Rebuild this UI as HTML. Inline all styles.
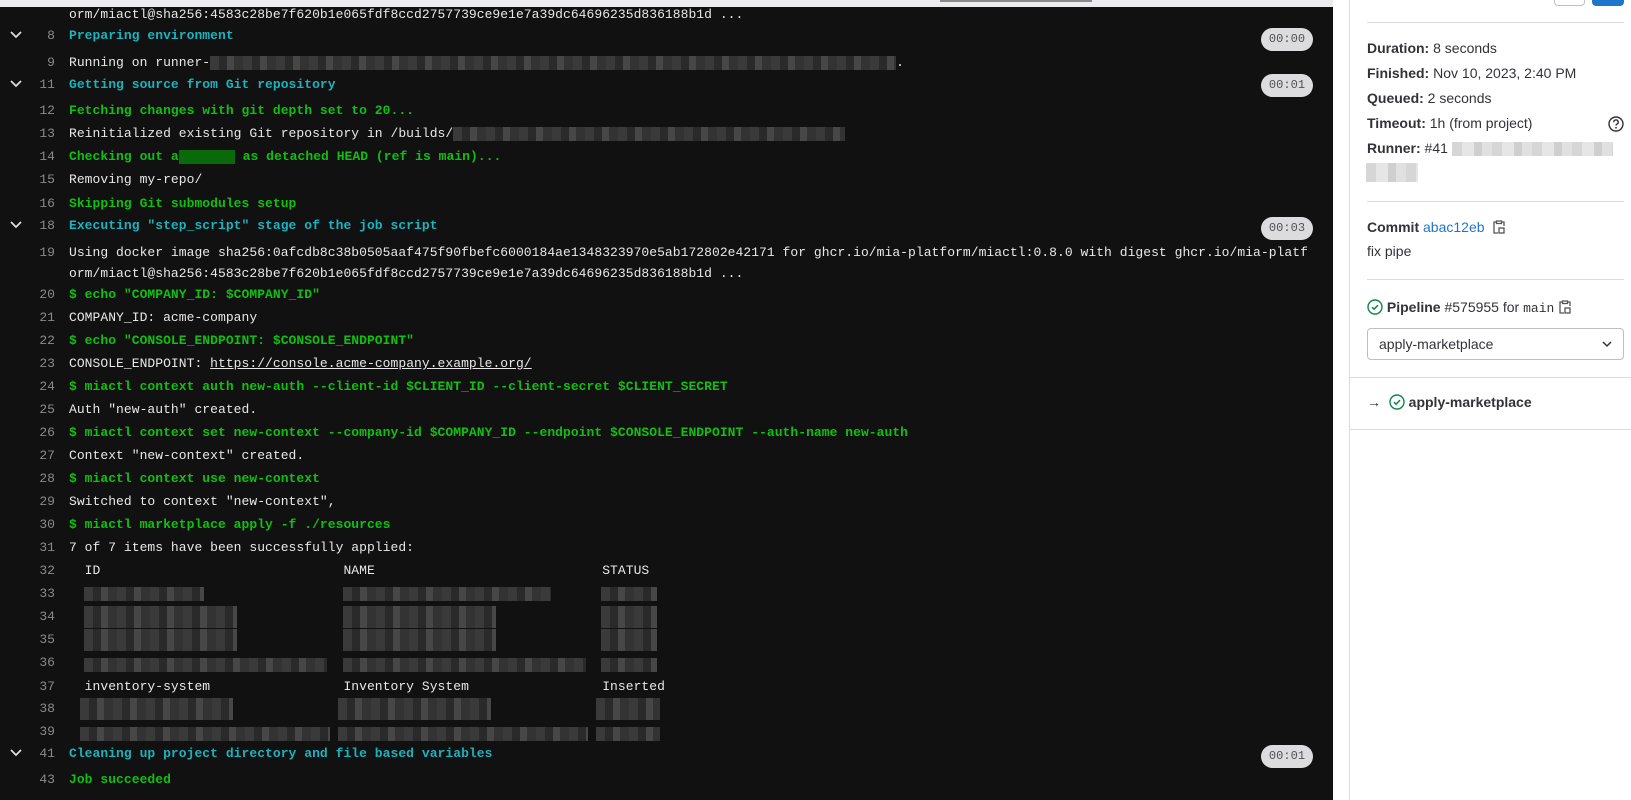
<!DOCTYPE html>
<html><head><meta charset="utf-8"><style>
*{margin:0;padding:0;box-sizing:border-box}
body{width:1631px;height:800px;overflow:hidden;background:#fff;font-family:"Liberation Sans",sans-serif;position:relative}
#log{position:absolute;left:0;top:0;width:1333px;height:800px;background:#111;font-family:"Liberation Mono",monospace;font-size:13px;color:#e8e8e8;letter-spacing:0.04px}
#strip{position:absolute;left:0;top:0;width:1333px;height:7px;background:#ececef}
.r{position:absolute;left:0;height:22px;line-height:22px;white-space:pre;width:1333px}
.n{position:absolute;left:0;width:55px;text-align:right;color:#8a8a8a}
.t{position:absolute;left:69px}
.c{color:#1ab3be;font-weight:bold}
.g{color:#10c010;font-weight:bold}
.chev{position:absolute;left:9px;top:5px}
.badge{position:absolute;left:1261px;width:52px;height:23px;border-radius:12px;background:#dcdcde;color:#535158;font-size:12px;line-height:23px;text-align:center;top:-1px}
.b{display:inline-block;vertical-align:middle;height:14px}
.bl{background:repeating-linear-gradient(90deg,#3a3a3a 0 9px,#2a2a2a 9px 17px,#474747 17px 24px,#333 24px 33px)}
a{color:#e8e8e8;text-decoration:underline}
#side{position:absolute;left:1349px;top:0;width:282px;height:800px;border-left:1px solid #dcdcde;color:#333238;font-size:14px}
.sl{position:absolute;left:17px;white-space:nowrap}
.hr{position:absolute;left:17px;width:257px;height:1px;background:#dcdcde}
.hrf{position:absolute;left:0;width:282px;height:1px;background:#dcdcde}
b{font-weight:bold}
.sb{display:inline-block;background:repeating-linear-gradient(90deg,#d6d6d6 0 10px,#e6e6e6 10px 22px,#cfcfcf 22px 30px,#e0e0e0 30px 40px)}
</style></head><body>
<div id="log">
<div id="strip"></div>
<div style="position:absolute;left:940px;top:0;width:152px;height:2px;background:#8a8a8a"></div>

<div class="r" style="top:4px"><span class="t">orm/miactl@sha256:4583c28be7f620b1e065fdf8ccd2757739ce9e1e7a39dc64696235d836188b1d ...</span></div>

<div class="r" style="top:25px"><svg class="chev" width="14" height="10" viewBox="0 0 14 10"><path d="M2 2l5 5 5-5" stroke="#ddd" stroke-width="1.8" fill="none"/></svg><span class="n">8</span><span class="t c">Preparing environment</span><span class="badge" style="top:3px">00:00</span></div>
<div class="r" style="top:52px"><span class="n">9</span><span class="t">Running on runner-<span class="b bl" style="width:686px"></span>.</span></div>
<div class="r" style="top:74px"><svg class="chev" width="14" height="10" viewBox="0 0 14 10"><path d="M2 2l5 5 5-5" stroke="#ddd" stroke-width="1.8" fill="none"/></svg><span class="n">11</span><span class="t c">Getting source from Git repository</span><span class="badge" style="top:0px">00:01</span></div>
<div class="r" style="top:100px"><span class="n">12</span><span class="t g">Fetching changes with git depth set to 20...</span></div>
<div class="r" style="top:123px"><span class="n">13</span><span class="t">Reinitialized existing Git repository in /builds/<span class="b bl" style="width:392px"></span></span></div>
<div class="r" style="top:146px"><span class="n">14</span><span class="t g">Checking out a<span class="b" style="width:56px;background:#0a6a0a"></span> as detached HEAD (ref is main)...</span></div>
<div class="r" style="top:169px"><span class="n">15</span><span class="t">Removing my-repo/</span></div>
<div class="r" style="top:193px"><span class="n">16</span><span class="t g">Skipping Git submodules setup</span></div>
<div class="r" style="top:215px"><svg class="chev" width="14" height="10" viewBox="0 0 14 10"><path d="M2 2l5 5 5-5" stroke="#ddd" stroke-width="1.8" fill="none"/></svg><span class="n">18</span><span class="t c">Executing "step_script" stage of the job script</span><span class="badge" style="top:2px">00:03</span></div>
<div class="r" style="top:242px"><span class="n">19</span><span class="t">Using docker image sha256:0afcdb8c38b0505aaf475f90fbefc6000184ae1348323970e5ab172802e42171 for ghcr.io/mia-platform/miactl:0.8.0 with digest ghcr.io/mia-platf</span></div>
<div class="r" style="top:263px"><span class="t">orm/miactl@sha256:4583c28be7f620b1e065fdf8ccd2757739ce9e1e7a39dc64696235d836188b1d ...</span></div>
<div class="r" style="top:284px"><span class="n">20</span><span class="t g">$ echo "COMPANY_ID: $COMPANY_ID"</span></div>
<div class="r" style="top:307px"><span class="n">21</span><span class="t">COMPANY_ID: acme-company</span></div>
<div class="r" style="top:330px"><span class="n">22</span><span class="t g">$ echo "CONSOLE_ENDPOINT: $CONSOLE_ENDPOINT"</span></div>
<div class="r" style="top:353px"><span class="n">23</span><span class="t">CONSOLE_ENDPOINT: <a>https://console.acme-company.example.org/</a></span></div>
<div class="r" style="top:376px"><span class="n">24</span><span class="t g">$ miactl context auth new-auth --client-id $CLIENT_ID --client-secret $CLIENT_SECRET</span></div>
<div class="r" style="top:399px"><span class="n">25</span><span class="t">Auth "new-auth" created.</span></div>
<div class="r" style="top:422px"><span class="n">26</span><span class="t g">$ miactl context set new-context --company-id $COMPANY_ID --endpoint $CONSOLE_ENDPOINT --auth-name new-auth</span></div>
<div class="r" style="top:445px"><span class="n">27</span><span class="t">Context "new-context" created.</span></div>
<div class="r" style="top:468px"><span class="n">28</span><span class="t g">$ miactl context use new-context</span></div>
<div class="r" style="top:491px"><span class="n">29</span><span class="t">Switched to context "new-context",</span></div>
<div class="r" style="top:514px"><span class="n">30</span><span class="t g">$ miactl marketplace apply -f ./resources</span></div>
<div class="r" style="top:537px"><span class="n">31</span><span class="t">7 of 7 items have been successfully applied:</span></div>
<div class="r" style="top:560px"><span class="n">32</span><span class="t">  ID                               NAME                             STATUS</span></div>
<div class="r" style="top:583px"><span class="n">33</span><span class="b bl" style="position:absolute;left:84px;top:4px;width:120px"></span><span class="b bl" style="position:absolute;left:343px;top:4px;width:208px"></span><span class="b bl" style="position:absolute;left:601px;top:4px;width:56px"></span></div>
<div class="r" style="top:606px"><span class="n">34</span><span class="b bl" style="position:absolute;left:84px;top:0px;height:22px;width:153px"></span><span class="b bl" style="position:absolute;left:343px;top:0px;height:22px;width:153px"></span><span class="b bl" style="position:absolute;left:601px;top:0px;height:22px;width:56px"></span></div>
<div class="r" style="top:629px"><span class="n">35</span><span class="b bl" style="position:absolute;left:84px;top:0px;height:22px;width:153px"></span><span class="b bl" style="position:absolute;left:343px;top:0px;height:22px;width:153px"></span><span class="b bl" style="position:absolute;left:601px;top:0px;height:22px;width:56px"></span></div>
<div class="r" style="top:652px"><span class="n">36</span><span class="b bl" style="position:absolute;left:84px;top:6px;width:243px"></span><span class="b bl" style="position:absolute;left:343px;top:6px;width:243px"></span><span class="b bl" style="position:absolute;left:601px;top:6px;width:56px"></span></div>
<div class="r" style="top:676px"><span class="n">37</span><span class="t">  inventory-system                 Inventory System                 Inserted</span></div>
<div class="r" style="top:698px"><span class="n">38</span><span class="b bl" style="position:absolute;left:80px;top:0px;height:22px;width:153px"></span><span class="b bl" style="position:absolute;left:338px;top:0px;height:22px;width:153px"></span><span class="b bl" style="position:absolute;left:596px;top:0px;height:22px;width:64px"></span></div>
<div class="r" style="top:721px"><span class="n">39</span><span class="b bl" style="position:absolute;left:80px;top:6px;width:250px"></span><span class="b bl" style="position:absolute;left:338px;top:6px;width:250px"></span><span class="b bl" style="position:absolute;left:596px;top:6px;width:64px"></span></div>
<div class="r" style="top:743px"><svg class="chev" width="14" height="10" viewBox="0 0 14 10"><path d="M2 2l5 5 5-5" stroke="#ddd" stroke-width="1.8" fill="none"/></svg><span class="n">41</span><span class="t c">Cleaning up project directory and file based variables</span><span class="badge" style="top:2px">00:01</span></div>
<div class="r" style="top:769px"><span class="n">43</span><span class="t g">Job succeeded</span></div>
</div>

<div id="side">
<div style="position:absolute;left:204px;top:-14px;width:31px;height:20px;border:1px solid #bfbfc3;border-radius:4px;background:#fff"></div>
<div style="position:absolute;left:242px;top:-14px;width:32px;height:20px;border-radius:4px;background:#1f75cb"></div>
<div class="sl" style="top:-19px;font-size:17px;font-weight:bold;color:#333238">apply-marketplace</div>
<div class="hr" style="top:22px"></div>
<div class="sl" style="top:40px"><b>Duration:</b> 8 seconds</div>
<div class="sl" style="top:65px"><b>Finished:</b> Nov 10, 2023, 2:40 PM</div>
<div class="sl" style="top:90px"><b>Queued:</b> 2 seconds</div>
<div class="sl" style="top:115px"><b>Timeout:</b> 1h (from project)</div>
<svg style="position:absolute;left:258px;top:116px" width="16" height="16" viewBox="0 0 16 16"><circle cx="8" cy="8" r="7" fill="none" stroke="#333238" stroke-width="1.4"/><path d="M5.8 6.2a2.2 2.2 0 1 1 3 2c-.6.3-.8.6-.8 1.3" fill="none" stroke="#333238" stroke-width="1.4"/><circle cx="8" cy="11.8" r=".9" fill="#333238"/></svg>
<div class="sl" style="top:140px"><b>Runner:</b> #41 <span class="sb" style="width:161px;height:14px;vertical-align:middle"></span></div>
<div class="sb" style="position:absolute;left:16px;top:163px;width:52px;height:19px"></div>
<div class="hr" style="top:201px"></div>
<div class="sl" style="top:219px"><b>Commit</b> <span style="color:#1f75cb">abac12eb</span> <svg width="14" height="16" viewBox="0 0 14 16" style="vertical-align:-3px;margin-left:4px"><path d="M4 3H2v11h4M10 3h2v4M4.5 2h5v2.5h-5z" fill="none" stroke="#555" stroke-width="1.3"/><rect x="7" y="9" width="5" height="5" fill="none" stroke="#555" stroke-width="1.3"/></svg></div>
<div class="sl" style="top:243px">fix pipe</div>
<div class="hr" style="top:279px"></div>
<div class="sl" style="top:299px"><svg width="16" height="16" viewBox="0 0 16 16" style="vertical-align:-3px"><circle cx="8" cy="8" r="7" fill="none" stroke="#108548" stroke-width="1.4"/><path d="M5 8.2l2 2 4-4" fill="none" stroke="#108548" stroke-width="1.5"/></svg> <b>Pipeline</b> #575955 for <span style="font-family:'Liberation Mono',monospace;font-size:13px">main</span> <svg width="14" height="16" viewBox="0 0 14 16" style="vertical-align:-3px"><path d="M4 3H2v11h4M10 3h2v4M4.5 2h5v2.5h-5z" fill="none" stroke="#555" stroke-width="1.3"/><rect x="7" y="9" width="5" height="5" fill="none" stroke="#555" stroke-width="1.3"/></svg></div>
<div style="position:absolute;left:17px;top:328px;width:257px;height:32px;border:1px solid #bfbfc3;border-radius:4px;font-size:14px;line-height:30px;padding-left:11px">apply-marketplace<svg style="position:absolute;right:10px;top:11px" width="12" height="8" viewBox="0 0 12 8"><path d="M2 2l4 4 4-4" fill="none" stroke="#333" stroke-width="1.5"/></svg></div>
<div class="hrf" style="top:377px"></div>
<div class="sl" style="top:394px">→ &nbsp;<svg width="16" height="16" viewBox="0 0 16 16" style="vertical-align:-3px"><circle cx="8" cy="8" r="7" fill="none" stroke="#108548" stroke-width="1.4"/><path d="M5 8.2l2 2 4-4" fill="none" stroke="#108548" stroke-width="1.5"/></svg> <b>apply-marketplace</b></div>
<div class="hrf" style="top:429px"></div>
</div>
</body></html>
